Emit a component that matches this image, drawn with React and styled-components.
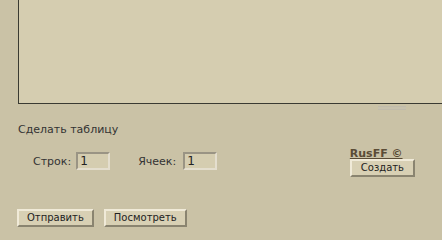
import React from "react";
import styled, { createGlobalStyle } from "styled-components";

const Global = createGlobalStyle`
  html, body { margin: 0; padding: 0; background: #cac2a6; overflow: hidden; }
  body { font-family: "DejaVu Sans", Verdana, sans-serif; font-size: 11px; color: #333; }
`;

const Page = styled.div`
  width: 442px;
  height: 240px;
  padding-left: 18px;
  box-sizing: border-box;
`;

const EditorWrap = styled.div`
  position: relative;
`;

const Editor = styled.div`
  width: 440px;
  height: 105px;
  margin-top: -1px;
  box-sizing: border-box;
  border: 1px solid #3a3a32;
  background: #d5cdb0;
`;

const Grip = styled.div`
  position: absolute;
  left: 360px;
  top: 107px;
  width: 28px;
  height: 2px;
  border-top: 1px solid #bdb9ae;
  border-bottom: 1px solid #bdb9ae;
  background: #c6c1b0;
  opacity: 0.7;
`;

const Title = styled.div`
  margin-top: 19px;
  line-height: 14px;
  color: #333;
`;

const Tools = styled.div`
  display: flex;
  justify-content: space-between;
  padding-right: 27px;
  margin-top: 11px;
`;

const Fields = styled.div`
  display: flex;
  align-items: center;
  padding-left: 15px;
  margin-top: 4px;
  height: 18px;
`;

const Label = styled.span`
  color: #333;
  margin-right: ${(p) => p.$mr || 5}px;
  margin-left: ${(p) => p.$ml || 0}px;
`;

const Input = styled.div`
  width: 34px;
  height: 18px;
  box-sizing: border-box;
  border: 2px solid;
  border-color: #9a9484 #e4dece #e4dece #9a9484;
  background: #d5cdb0;
  color: #222;
  font-size: 12px;
  line-height: 14px;
  padding-left: 2px;
`;

const Credit = styled.div`
  display: flex;
  flex-direction: column;
  align-items: flex-start;
`;

const Brand = styled.a`
  font-weight: bold;
  color: #5a4c36;
  text-decoration: underline;
  line-height: 11px;
  font-size: 11px;
`;

const Button = styled.div`
  height: 18px;
  box-sizing: border-box;
  padding: 0 ${(p) => p.$px || 8}px;
  border: 2px solid;
  border-color: #f0ead8 #8a8470 #8a8470 #f0ead8;
  background: #d8d0b4;
  color: #222;
  line-height: 14px;
  font-size: 10px;
  display: inline-flex;
  align-items: center;
  white-space: nowrap;
`;

const Actions = styled.div`
  display: flex;
  gap: 10px;
  margin-left: -1px;
  margin-top: 32px;
`;

export default function App() {
  return (
    <>
      <Global />
      <Page>
        <EditorWrap>
          <Editor />
          <Grip />
        </EditorWrap>
        <Title>Сделать таблицу</Title>
        <Tools>
          <Fields>
            <Label>Строк:</Label>
            <Input>1</Input>
            <Label $ml={28} $mr={7}>Ячеек:</Label>
            <Input>1</Input>
          </Fields>
          <Credit>
            <Brand>RusFF ©</Brand>
            <Button $px={9}>Создать</Button>
          </Credit>
        </Tools>
        <Actions>
          <Button>Отправить</Button>
          <Button>Посмотреть</Button>
        </Actions>
      </Page>
    </>
  );
}
